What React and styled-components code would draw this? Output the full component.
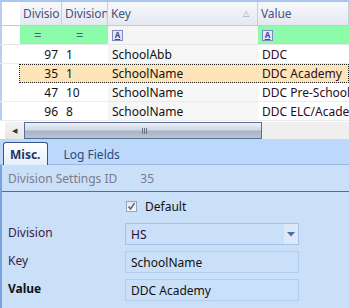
import React from 'react'
import styled, { createGlobalStyle } from 'styled-components'

const Global = createGlobalStyle`
  html, body { margin: 0; padding: 0; }
  body {
    width: 349px;
    height: 308px;
    overflow: hidden;
    font-family: "Noto Sans", "Open Sans", sans-serif;
    font-size: 12px;
    background: #fff;
  }
`

const Screen = styled.div`
  width: 349px;
  height: 308px;
  display: flex;
  flex-direction: column;
  overflow: hidden;
`

const GridArea = styled.div`
  border-top: 2px solid #a9c6ee;
  background: #fff;
  display: flex;
  flex-direction: column;
`

const cols = '20px 42px 46px 150px 91px'

const Row = styled.div`
  display: grid;
  grid-template-columns: ${cols};
  height: ${({ h }) => h || '19px'};
  box-sizing: border-box;
  border-bottom: 1px solid ${({ line }) => line || '#ececec'};
`

const HeadCell = styled.div`
  display: flex;
  align-items: center;
  padding: 0 3px;
  color: #44557f;
  font-size: 12px;
  letter-spacing: -0.1px;
  background: linear-gradient(#f7f8fb, #e4e8f0);
  border-right: 1px solid #c7cedc;
  position: relative;
  white-space: nowrap;
  overflow: hidden;
`

const SortMark = styled.span`
  position: absolute;
  right: 8px;
  top: 5px;
  font-size: 8px;
  color: #9aa0ac;
`

const Indicator = styled.div`
  background: #fff;
  border-left: 2px solid #b8d0f0;
`

const FilterCell = styled.div`
  display: flex;
  align-items: center;
  padding: 0 14px;
  background: ${({ green }) => (green ? '#8cfcab' : '#f5f5f5')};
  color: #4b5d86;
  font-size: 13px;
`

const FilterIcon = styled.span`
  display: inline-flex;
  align-items: center;
  justify-content: center;
  width: 9px;
  height: 9px;
  border: 1px solid #8088c4;
  background: #e6e8f8;
  color: #4048a0;
  font-size: 8px;
  font-weight: bold;
  line-height: 1;
  text-decoration: underline;
  margin-left: -10px;
`

const DataCell = styled.div`
  display: flex;
  align-items: center;
  justify-content: ${({ right }) => (right ? 'flex-end' : 'flex-start')};
  padding: 0 4px;
  white-space: nowrap;
  overflow: hidden;
  font-size: 12px;
  color: ${({ value }) => (value ? '#2a0c2a' : '#111')};
  background: ${({ sel, shade }) => (sel ? 'transparent' : shade ? '#f6f6f6' : '#fff')};
`

const SelRow = styled(Row)`
  background: #fde5b9;
  border: 1px dotted #222;
  border-left: none;
  & > ${Indicator} { margin-top: -1px; margin-bottom: -1px; border-right: 1px dotted #222; }
`

const ScrollBar = styled.div`
  display: flex;
  align-items: stretch;
  height: 17px;
  margin-top: 1px;
  padding-left: 5px;
  background: #fff;
`

const ScrollTrack = styled.div`
  flex: 1;
  display: flex;
  align-items: stretch;
  background: #efefef;
`

const ArrowBtn = styled.div`
  width: 18px;
  display: flex;
  align-items: center;
  justify-content: center;
  background: linear-gradient(#f4f4f4, #e6e6e6);
  color: #333;
  font-size: 7px;
`

const Thumb = styled.div`
  width: 238px;
  margin-left: 1px;
  box-sizing: border-box;
  border: 1px solid #5a6d98;
  background: linear-gradient(#eef1f6, #d0d8e3 45%, #a8b5c6 55%, #b9c4d2);
  display: flex;
  align-items: center;
  justify-content: center;
  padding-left: 4px;
`

const Grip = styled.span`
  width: 6px;
  height: 6px;
  background: repeating-linear-gradient(90deg, #6a7282 0 1px, transparent 1px 2px);
`

const TabStrip = styled.div`
  height: 26px;
  background: #bcd9fc;
  border-bottom: 1px solid #9dbbe2;
  display: flex;
  align-items: flex-end;
  padding-left: 3px;
  box-sizing: border-box;
`

const Tab = styled.div`
  height: ${({ active }) => (active ? '23px' : '20px')};
  box-sizing: border-box;
  padding: 0 ${({ active }) => (active ? '6px' : '12px')};
  display: flex;
  align-items: center;
  font-size: 12px;
  color: ${({ active }) => (active ? '#1d3565' : '#2c4a82')};
  font-weight: ${({ active }) => (active ? 'bold' : 'normal')};
  background: ${({ active }) => (active ? 'linear-gradient(#ffffff, #e6eefa)' : 'transparent')};
  border: ${({ active }) => (active ? '1px solid #34558a' : '1px solid transparent')};
  border-bottom: none;
  border-radius: 3px 3px 0 0;
  margin-bottom: ${({ active }) => (active ? '-1px' : '0')};
  margin-right: 3px;
`

const Panel = styled.div`
  flex: 1;
  background: #cadff8;
  border-left: 2px solid #7aa2dc;
  display: flex;
  flex-direction: column;
`

const InfoRow = styled.div`
  height: 27px;
  box-sizing: border-box;
  display: flex;
  align-items: center;
  padding-left: 6px;
  color: #7a7c8c;
  font-size: 12px;
  border-bottom: 1px solid #5e6b82;
`

const InfoValue = styled.span`
  margin-left: 23px;
`

const Form = styled.div`
  display: grid;
  grid-template-columns: 117px 174px;
  grid-auto-rows: 28px;
  align-items: center;
  padding: 0 0 0 6px;
`

const Label = styled.div`
  color: ${({ bold }) => (bold ? '#111' : '#3b1b46')};
  font-weight: ${({ bold }) => (bold ? 'bold' : 'normal')};
  font-size: 12px;
  margin-top: -4px;
`

const CheckLine = styled.label`
  grid-column: 2;
  display: flex;
  align-items: center;
  gap: 8px;
  color: #111;
  font-size: 12px;
  height: 20px;
  padding-left: 1px;
`

const CheckBox = styled.span`
  width: 11px;
  height: 11px;
  box-sizing: border-box;
  border: 1px solid #9aa6b8;
  background: linear-gradient(#e4e8ee, #f6f7f9);
  display: flex;
  align-items: center;
  justify-content: center;
`

const Field = styled.div`
  height: 22px;
  box-sizing: border-box;
  border: 1px solid ${({ combo }) => (combo ? '#a4c2ea' : '#b3cdee')};
  background: #cadff8;
  display: flex;
  align-items: center;
  padding-left: 5px;
  color: ${({ combo }) => (combo ? '#2a0c3a' : '#111')};
  font-size: 12px;
  position: relative;
`

const DropBtn = styled.span`
  position: absolute;
  right: 0;
  top: 0;
  bottom: 0;
  width: 14px;
  background: #dde9f9;
  display: flex;
  align-items: center;
  justify-content: center;
`

const rows = [
  { id: 97, div: '1', key: 'SchoolAbb', value: 'DDC' },
  { id: 35, div: '1', key: 'SchoolName', value: 'DDC Academy', sel: true },
  { id: 47, div: '10', key: 'SchoolName', value: 'DDC Pre-School' },
  { id: 96, div: '8', key: 'SchoolName', value: 'DDC ELC/Academy' },
]

export default function App() {
  return (
    <Screen>
      <Global />
      <GridArea>
        <Row h="24px" line="#c4cad6">
          <Indicator />
          <HeadCell>Divisio</HeadCell>
          <HeadCell>Division</HeadCell>
          <HeadCell>Key<SortMark>△</SortMark></HeadCell>
          <HeadCell>Value</HeadCell>
        </Row>
        <Row h="19px" line="#e6e6e6">
          <Indicator />
          <FilterCell green>=</FilterCell>
          <FilterCell green>=</FilterCell>
          <FilterCell><FilterIcon>A</FilterIcon></FilterCell>
          <FilterCell green><FilterIcon>A</FilterIcon></FilterCell>
        </Row>
        {rows.map(r => {
          const R = r.sel ? SelRow : Row
          return (
            <R key={r.id}>
              <Indicator />
              <DataCell right sel={r.sel}>{r.id}</DataCell>
              <DataCell sel={r.sel}>{r.div}</DataCell>
              <DataCell sel={r.sel} shade>{r.key}</DataCell>
              <DataCell sel={r.sel} value>{r.value}</DataCell>
            </R>
          )
        })}
        <ScrollBar>
          <ScrollTrack>
            <ArrowBtn>◀</ArrowBtn>
            <Thumb><Grip /></Thumb>
          </ScrollTrack>
        </ScrollBar>
      </GridArea>
      <TabStrip>
        <Tab active>Misc.</Tab>
        <Tab>Log Fields</Tab>
      </TabStrip>
      <Panel>
        <InfoRow>
          Division Settings ID<InfoValue>35</InfoValue>
        </InfoRow>
        <Form>
          <CheckLine>
            <CheckBox>
              <svg width="9" height="9" viewBox="0 0 9 9">
                <path d="M1.5 4.5 L3.5 7 L7.5 1.2" fill="none" stroke="#4a5f8a" strokeWidth="1.4" />
              </svg>
            </CheckBox>
            Default
          </CheckLine>
          <Label>Division</Label>
          <Field combo>
            HS
            <DropBtn>
              <svg width="8" height="5" viewBox="0 0 8 5">
                <path d="M0 0 H8 L4 4.5 Z" fill="#4a6ea6" />
              </svg>
            </DropBtn>
          </Field>
          <Label>Key</Label>
          <Field>SchoolName</Field>
          <Label bold>Value</Label>
          <Field>DDC Academy</Field>
        </Form>
      </Panel>
    </Screen>
  )
}
